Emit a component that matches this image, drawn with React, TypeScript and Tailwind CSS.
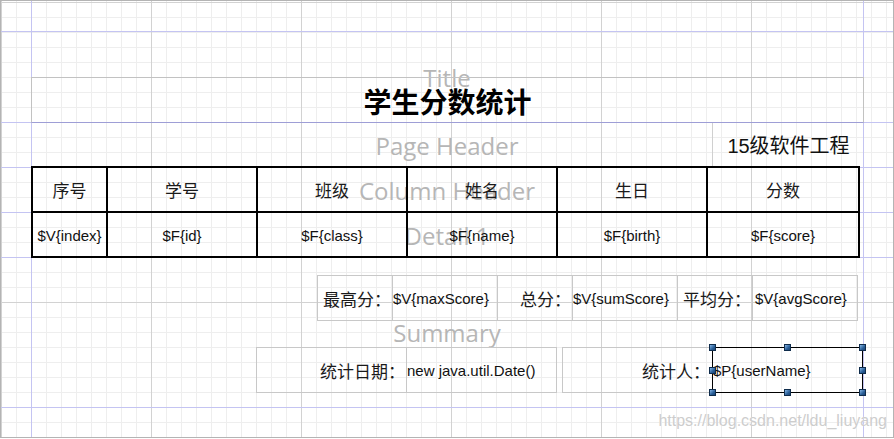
import React from "react";

const CJK = "font-['Noto_Sans_CJK_SC',sans-serif]";
const SANS = "font-['Liberation_Sans','Noto_Sans_CJK_SC',sans-serif]";

function Band({
  h,
  label,
  children,
}: {
  h: string;
  label?: string;
  children?: React.ReactNode;
}) {
  return (
    <div className={`relative shrink-0 ${h}`}>
      <div className="absolute left-0 right-0 bottom-0 h-px bg-[#c4c4f2] z-0" />
      {label && (
        <div className="absolute inset-0 z-0 flex items-center justify-center font-['Open_Sans',sans-serif] text-[24px] leading-none text-[#b6b6b6] whitespace-nowrap">
          {label}
        </div>
      )}
      {children}
    </div>
  );
}

function Handle({ pos }: { pos: string }) {
  return (
    <div
      className={`absolute w-[7px] h-[7px] border border-[#0f2c4c] bg-[linear-gradient(135deg,#86b6e6,#2a5f98_60%,#1b4373)] ${pos}`}
    />
  );
}

const headers = [
  { t: "序号", w: "w-[75px]" },
  { t: "学号", w: "w-[150px]" },
  { t: "班级", w: "w-[150px]" },
  { t: "姓名", w: "w-[150px]" },
  { t: "生日", w: "w-[150px]" },
  { t: "分数", w: "w-[154px] border-r-2" },
];

const details = [
  { t: "$V{index}", w: "w-[75px]" },
  { t: "$F{id}", w: "w-[150px]" },
  { t: "$F{class}", w: "w-[150px]" },
  { t: "$F{name}", w: "w-[150px]" },
  { t: "$F{birth}", w: "w-[150px]" },
  { t: "$F{score}", w: "w-[154px] border-r-2" },
];

export default function App() {
  return (
    <div className="relative w-[894px] h-[438px] box-border border border-[#b4b4b4] overflow-hidden flex flex-col bg-white [background-image:linear-gradient(to_right,#d2d2d2_1px,transparent_1px),linear-gradient(to_bottom,#d2d2d2_1px,transparent_1px),linear-gradient(to_right,#eeeeee_1px,transparent_1px),linear-gradient(to_bottom,#eeeeee_1px,transparent_1px)] [background-size:150px_100%,100%_300px,15px_100%,100%_15px] [background-position:0_0,0_1px,0_0,0_1px]">
      {/* margin guides */}
      <div className="absolute top-0 bottom-0 left-[30px] w-px bg-[#c4c4f2] z-0" />
      <div className="absolute top-0 bottom-0 left-[862px] w-px bg-[#c4c4f2] z-0" />

      <Band h="h-[31px]" />

      <Band h="h-[91px]" label="Title">
        <div className="relative z-10 pt-[45px] pl-[30px]">
          <div className="w-[833px] h-[46px] box-border border border-[#c2c2c2] border-b-[#9e9ed6] flex items-center justify-center pt-[2px]">
            <span className={`${CJK} text-[28px] font-bold leading-none text-black`}>
              学生分数统计
            </span>
          </div>
        </div>
      </Band>

      <Band h="h-[45px]" label="Page Header">
        <div className="relative z-10 h-full pl-[711px]">
          <div className="w-[152px] h-full box-border border-l border-[#d0d0d0] flex items-center justify-center">
            <span className={`${SANS} text-[20px] leading-none text-[#111]`}>15级软件工程</span>
          </div>
        </div>
      </Band>

      <Band h="h-[45px]" label="Column Header">
        <div className="relative z-10 -mt-[2px] ml-[30px] flex h-[47px] w-[829px] box-border border-t-2 border-b-2 border-black">
          {headers.map((c) => (
            <div
              key={c.t}
              className={`${c.w} h-full box-border border-l-2 border-black flex items-center justify-center`}
            >
              <span className={`${CJK} text-[17px] leading-none text-[#1a1a1a]`}>{c.t}</span>
            </div>
          ))}
        </div>
      </Band>

      <Band h="h-[45px]" label="Detail 1">
        <div className="relative z-10 ml-[30px] flex h-[45px] w-[829px] box-border border-b-2 border-black">
          {details.map((c) => (
            <div
              key={c.t}
              className={`${c.w} h-full box-border border-l-2 border-black flex items-center justify-center pt-[2px]`}
            >
              <span className={`${SANS} text-[15px] leading-none text-[#111]`}>{c.t}</span>
            </div>
          ))}
        </div>
      </Band>

      <Band h="h-[150px]" label="Summary">
        <div className="relative z-10 mt-[17px] pl-[316px] flex h-[46px]">
          <div className="w-[76px] h-full box-border border border-[#c8c8c8] flex items-center justify-end pr-[1px]">
            <span className={`${CJK} text-[17px] leading-none text-[#1a1a1a]`}>最高分：</span>
          </div>
          <div className="w-[106px] -ml-px h-full box-border border border-[#c8c8c8] flex items-center justify-start">
            <span className={`${SANS} text-[15px] leading-none text-[#111]`}>$V{"{maxScore}"}</span>
          </div>
          <div className="w-[76px] -ml-px h-full box-border border border-[#c8c8c8] flex items-center justify-end pr-[1px]">
            <span className={`${CJK} text-[17px] leading-none text-[#1a1a1a]`}>总分：</span>
          </div>
          <div className="w-[106px] -ml-px h-full box-border border border-[#c8c8c8] flex items-center justify-start">
            <span className={`${SANS} text-[15px] leading-none text-[#111]`}>$V{"{sumScore}"}</span>
          </div>
          <div className="w-[76px] -ml-px h-full box-border border border-[#c8c8c8] flex items-center justify-end pr-[1px]">
            <span className={`${CJK} text-[17px] leading-none text-[#1a1a1a]`}>平均分：</span>
          </div>
          <div className="w-[106px] -ml-px h-full box-border border border-[#c8c8c8] flex items-center justify-start pl-[2px]">
            <span className={`${SANS} text-[15px] leading-none text-[#111]`}>$V{"{avgScore}"}</span>
          </div>
        </div>

        <div className="relative z-10 mt-[26px] pl-[255px] flex h-[46px]">
          <div className="w-[151px] h-full box-border border border-[#c8c8c8] flex items-center justify-end pr-[1px]">
            <span className={`${CJK} text-[17px] leading-none text-[#1a1a1a]`}>统计日期：</span>
          </div>
          <div className="w-[151px] -ml-px h-full box-border border border-[#c8c8c8] flex items-center justify-start">
            <span className={`${SANS} text-[15px] leading-none text-[#111]`}>new java.util.Date()</span>
          </div>
          <div className="w-[151px] ml-[5px] h-full box-border border border-[#c8c8c8] flex items-center justify-end pr-[2px]">
            <span className={`${CJK} text-[17px] leading-none text-[#1a1a1a]`}>统计人：</span>
          </div>
          <div className="relative w-[151px] -ml-px h-full box-border border border-black flex items-center justify-start">
            <span className={`${SANS} text-[15px] leading-none text-[#111]`}>$P{"{userName}"}</span>
            <Handle pos="left-[-4px] top-[-4px]" />
            <Handle pos="left-[71px] top-[-4px]" />
            <Handle pos="left-[146px] top-[-4px]" />
            <Handle pos="left-[-4px] top-[19px]" />
            <Handle pos="left-[146px] top-[19px]" />
            <Handle pos="left-[-4px] top-[41px]" />
            <Handle pos="left-[71px] top-[41px]" />
            <Handle pos="left-[146px] top-[41px]" />
          </div>
        </div>
      </Band>

      <div className="relative z-10 h-[29px] shrink-0 flex items-center justify-end pr-[6px] pb-[4px]">
        <span className={`${SANS} text-[16px] leading-none text-[#cdcdcd] [text-shadow:0_0_1px_#ffffff]`}>
          https://blog.csdn.net/ldu_liuyang
        </span>
      </div>
    </div>
  );
}
